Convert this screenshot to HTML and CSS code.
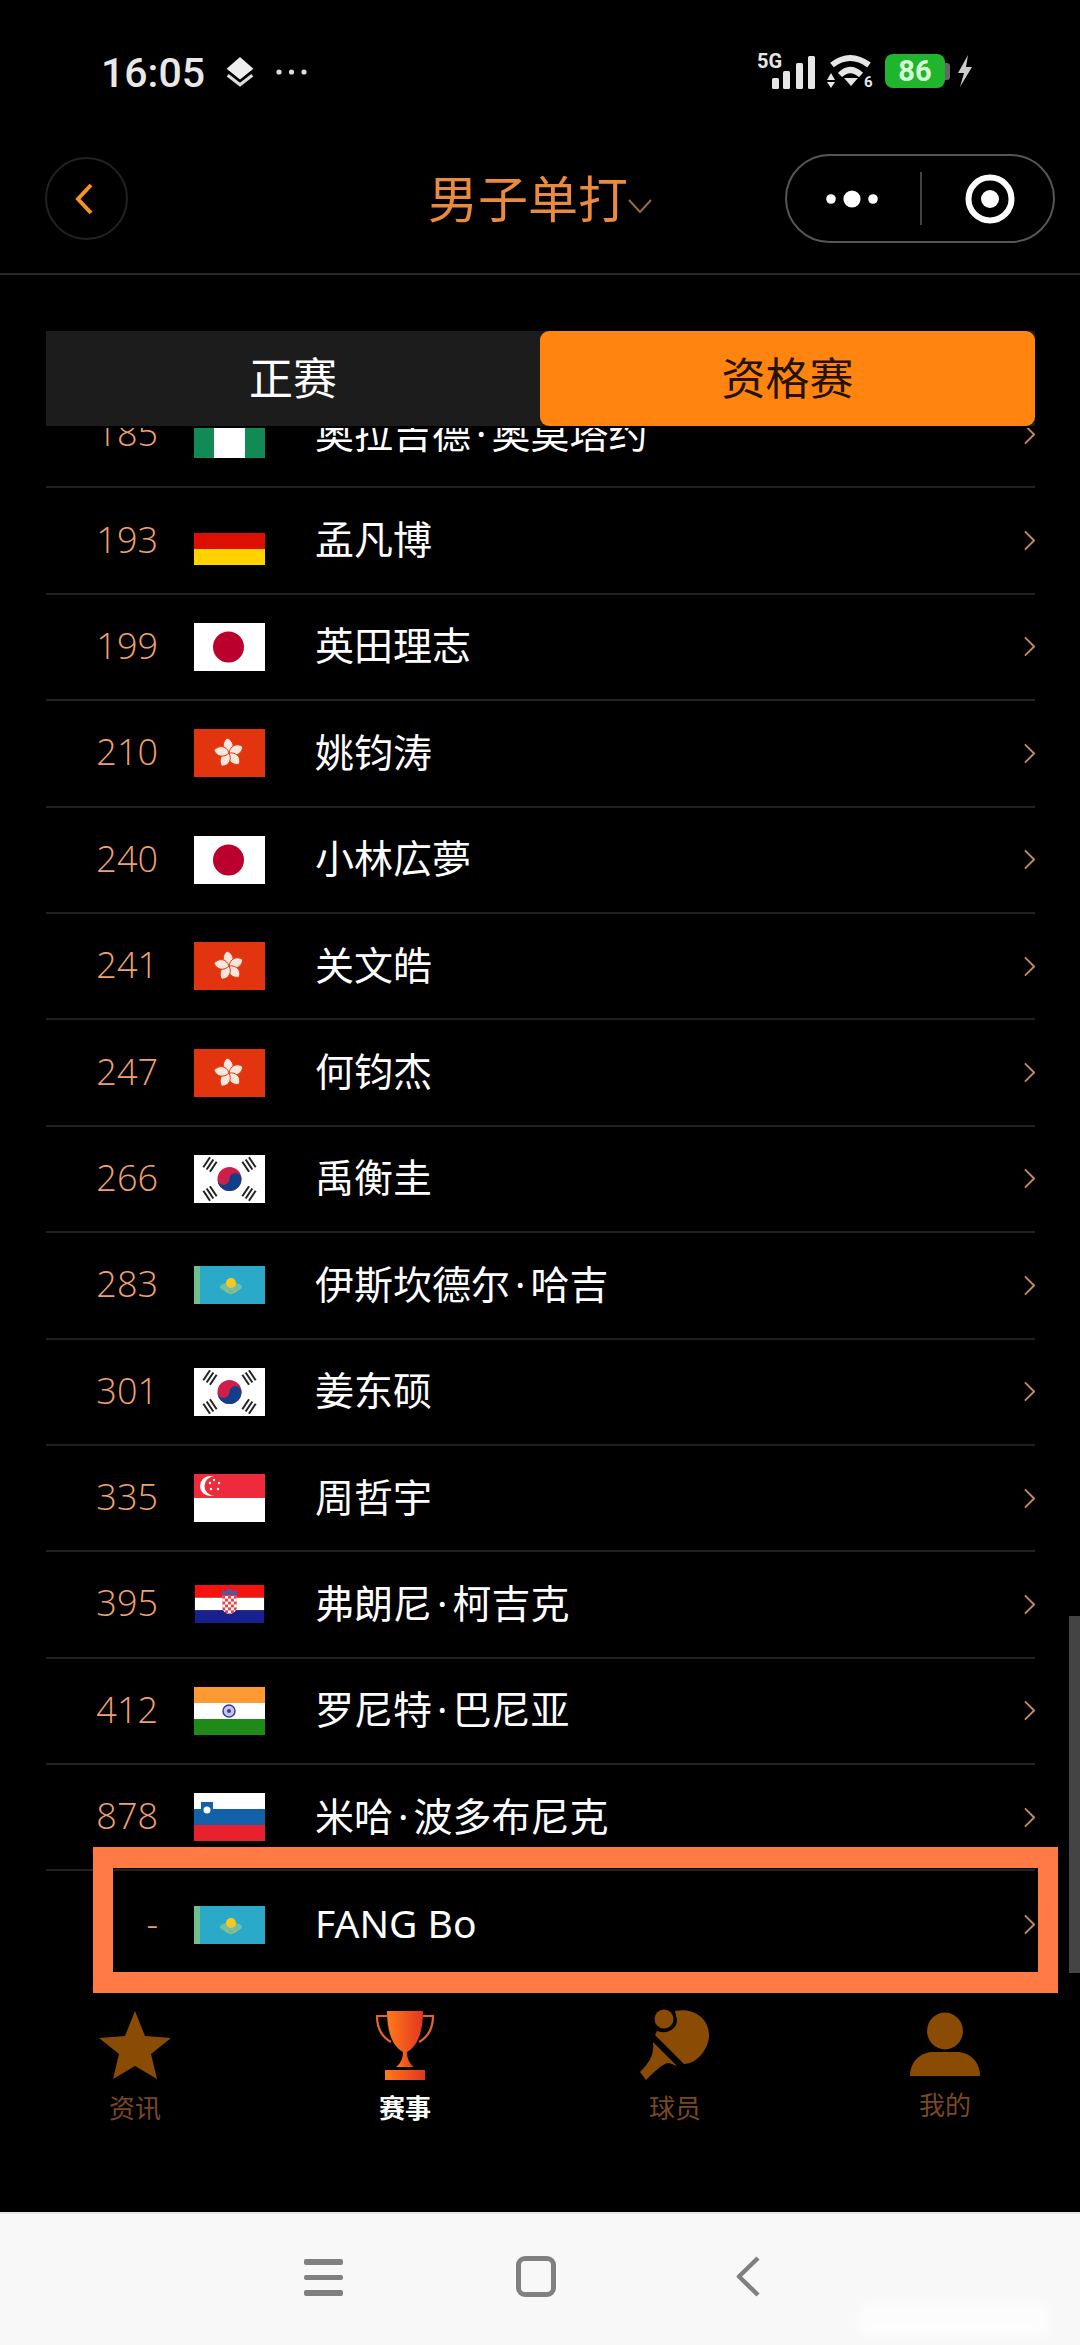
FILE: index.html
```html
<!DOCTYPE html>
<html>
  <head>
    <meta charset="utf-8">
    <title>男子单打</title>
    <link rel="stylesheet" href="styles.css">
  </head>
  <body>
  <svg class="defs" width="0" height="0">
    <defs>
      <pattern id="checks" width="6" height="6" patternUnits="userSpaceOnUse" x="28" y="11">
        <rect width="6" height="6" fill="#fff"/>
        <rect width="3" height="3" fill="#e8414a"/>
        <rect x="3" y="3" width="3" height="3" fill="#e8414a"/>
      </pattern>
      <path id="petal" d="M0 0C-6-3-8-10-2-15C4-13 7-5 0 0Z" fill="#fbe6dc" stroke="#e2340f" stroke-width=".9"/>
      <g id="bars">
        <rect x="-6" y="-5" width="12" height="2"/>
        <rect x="-6" y="-1" width="12" height="2"/>
        <rect x="-6" y="3" width="12" height="2"/>
      </g>
    </defs>
    <symbol id="chev" viewBox="0 0 12 22">
      <path d="M1 1L11 11L1 21" fill="none" stroke="#c48a62" stroke-width="2"/>
    </symbol>
    <symbol id="ng" viewBox="0 0 71 48">
      <rect width="71" height="48" fill="#fff"/>
      <rect width="20" height="48" fill="#118a55"/>
      <rect x="51" width="20" height="48" fill="#118a55"/>
    </symbol>
    <symbol id="de" viewBox="0 0 71 48">
      <rect width="71" height="16" fill="#000"/>
      <rect y="16" width="71" height="16" fill="#dd1000"/>
      <rect y="32" width="71" height="16" fill="#ffd200"/>
    </symbol>
    <symbol id="jp" viewBox="0 0 71 48">
      <rect width="71" height="48" fill="#fff"/>
      <circle cx="34.5" cy="24" r="15.5" fill="#bc002d"/>
    </symbol>
    <symbol id="hk" viewBox="0 0 71 48">
      <rect width="71" height="48" fill="#e2340f"/>
      <g transform="translate(35 24)">
        <use href="#petal"/>
        <use href="#petal" transform="rotate(72)"/>
        <use href="#petal" transform="rotate(144)"/>
        <use href="#petal" transform="rotate(216)"/>
        <use href="#petal" transform="rotate(288)"/>
      </g>
    </symbol>
    <symbol id="kr" viewBox="0 0 71 48">
      <rect width="71" height="48" fill="#fff"/>
      <circle cx="35.5" cy="24" r="12" fill="#cd1f48"/>
      <path d="M23.5 24A12 12 0 0 0 47.5 24A6 6 0 0 0 35.5 24A6 6 0 0 1 23.5 24Z" fill="#123f8c"/>
      <use href="#bars" transform="translate(16 9.5) rotate(-56)" fill="#222"/>
      <use href="#bars" transform="translate(55 9.5) rotate(56)" fill="#222"/>
      <use href="#bars" transform="translate(16 38.5) rotate(56)" fill="#222"/>
      <use href="#bars" transform="translate(55 38.5) rotate(-56)" fill="#222"/>
    </symbol>
    <symbol id="kz" viewBox="0 0 71 38">
      <rect width="71" height="38" fill="#2aaac8"/>
      <rect width="6" height="38" fill="#6fc08d"/>
      <ellipse cx="37" cy="21" rx="11" ry="4.5" fill="#74bfa0"/>
      <circle cx="37" cy="17" r="5" fill="#f7c81e"/>
      <path d="M31 24Q37 30 43 24" fill="none" stroke="#8cc28a" stroke-width="2"/>
    </symbol>
    <symbol id="sg" viewBox="0 0 71 48">
      <rect width="71" height="48" fill="#fff"/>
      <rect width="71" height="24" fill="#ee2b3d"/>
      <circle cx="16" cy="12" r="10" fill="#fff"/>
      <circle cx="20" cy="12" r="9.5" fill="#ee2b3d"/>
      <g fill="#fff">
        <circle cx="20" cy="6" r="1.2"/>
        <circle cx="25" cy="9" r="1.2"/>
        <circle cx="24" cy="15" r="1.2"/>
        <circle cx="17" cy="15" r="1.2"/>
        <circle cx="16" cy="9" r="1.2"/>
      </g>
    </symbol>
    <symbol id="hr" viewBox="0 0 71 39">
      <rect width="71" height="13" fill="#f5120f"/>
      <rect y="13" width="71" height="13" fill="#fff"/>
      <rect y="26" width="71" height="13" fill="#17208f"/>
      <path d="M28 11H43V23C43 27 39 29 35.5 30C32 29 28 27 28 23Z" fill="url(#checks)"/>
      <path d="M27 10L28 5L31 7L34 4L37 4L40 7L43 5L44 10Z" fill="#4a5ca8"/>
    </symbol>
    <symbol id="in" viewBox="0 0 71 48">
      <rect width="71" height="16" fill="#ff9a33"/>
      <rect y="16" width="71" height="16" fill="#fff"/>
      <rect y="32" width="71" height="16" fill="#1f8a1a"/>
      <circle cx="35" cy="24" r="6" fill="#c7c7ec" stroke="#3b3ba2" stroke-width="1.5"/>
      <circle cx="35" cy="24" r="2" fill="#3b3ba2"/>
    </symbol>
    <symbol id="si" viewBox="0 0 71 48">
      <rect width="71" height="16" fill="#fff"/>
      <rect y="16" width="71" height="16" fill="#1261a9"/>
      <rect y="32" width="71" height="16" fill="#e9202e"/>
      <path d="M7 9H19V18C19 21 15 23 13 24C11 23 7 21 7 18Z" fill="#1261a9"/>
      <circle cx="13" cy="17" r="3.5" fill="#fff"/>
    </symbol>
  </svg>

  <div class="page">
    <div class="statusbar">
      <span class="time">16:05</span>
      <svg class="layers" viewBox="0 0 27 29">
        <path d="M13.5 0L26 11L13.5 21L1 11Z" fill="#eee"/>
        <path d="M2 17L13.5 26L25 17" fill="none" stroke="#ddd" stroke-width="3"/>
      </svg>
      <svg class="more" viewBox="0 0 31 6">
        <circle cx="3" cy="3" r="2.6" fill="#ddd"/>
        <circle cx="15.5" cy="3" r="2.6" fill="#ddd"/>
        <circle cx="28" cy="3" r="2.6" fill="#ddd"/>
      </svg>
      <div class="status-right">
        <svg class="signal" viewBox="0 -6 58 42">
          <text x="0" y="15" class="signal-text">5G</text>
          <g fill="#e6e6e6">
            <rect x="15" y="25" width="7" height="11" rx="1.5"/>
            <rect x="26" y="18" width="7" height="18" rx="1.5"/>
            <rect x="39" y="10" width="7" height="26" rx="1.5"/>
            <rect x="51" y="3" width="7" height="33" rx="1.5"/>
          </g>
        </svg>
        <svg class="wifi" viewBox="0 0 46 40">
          <path d="M5 11Q23-3 42 11" fill="none" stroke="#e6e6e6" stroke-width="6"/>
          <path d="M13 21Q23 11 34 21" fill="none" stroke="#e6e6e6" stroke-width="6"/>
          <path d="M17 24H31L24 32Z" fill="#e6e6e6"/>
          <path d="M4 19L8 26H0ZM0 28H8L4 34Z" fill="#e6e6e6"/>
          <text x="37" y="33" class="wifi-text">6</text>
        </svg>
        <div class="battery">86</div>
        <div class="battery-nub"></div>
        <svg class="bolt" viewBox="0 0 16 32">
          <path d="M11 0L1 18H7L3 32L15 12H9Z" fill="#ccc"/>
        </svg>
      </div>
    </div>

    <div class="header">
      <div class="back">
        <svg class="back-icon" viewBox="0 0 20 32">
          <path d="M17 2L4 16L17 30" fill="none" stroke="#f7941d" stroke-width="4"/>
        </svg>
      </div>
      <div class="title">
        <span>男子单打</span>
        <svg class="title-chev" viewBox="0 0 24 14">
          <path d="M1 1L12 13L23 1" fill="none" stroke="#96684a" stroke-width="2"/>
        </svg>
      </div>
      <div class="capsule">
        <svg class="capsule-dots" viewBox="0 0 52 18">
          <circle cx="5" cy="9" r="4.8" fill="#fff"/>
          <circle cx="26" cy="9" r="8.6" fill="#fff"/>
          <circle cx="47" cy="9" r="4.8" fill="#fff"/>
        </svg>
        <div class="capsule-line"></div>
        <svg class="capsule-target" viewBox="0 0 50 50">
          <circle cx="25" cy="25" r="21.5" fill="none" stroke="#fff" stroke-width="6"/>
          <circle cx="25" cy="25" r="9" fill="#fff"/>
        </svg>
      </div>
    </div>

    <div class="tabs">
      <div class="tab">正赛</div>
      <div class="tab tab-active">资格赛</div>
    </div>

    <div class="list">
      <div class="list-inner">
        <div class="row"><span class="rank">185</span><svg class="flag"><use href="#ng"/></svg><span class="name">奥拉吉德<span class="dot">·</span>奥莫塔约</span><svg class="chev"><use href="#chev"/></svg></div>
        <div class="row"><span class="rank">193</span><svg class="flag"><use href="#de"/></svg><span class="name">孟凡博</span><svg class="chev"><use href="#chev"/></svg></div>
        <div class="row"><span class="rank">199</span><svg class="flag"><use href="#jp"/></svg><span class="name">英田理志</span><svg class="chev"><use href="#chev"/></svg></div>
        <div class="row"><span class="rank">210</span><svg class="flag"><use href="#hk"/></svg><span class="name">姚钧涛</span><svg class="chev"><use href="#chev"/></svg></div>
        <div class="row"><span class="rank">240</span><svg class="flag"><use href="#jp"/></svg><span class="name">小林広夢</span><svg class="chev"><use href="#chev"/></svg></div>
        <div class="row"><span class="rank">241</span><svg class="flag"><use href="#hk"/></svg><span class="name">关文皓</span><svg class="chev"><use href="#chev"/></svg></div>
        <div class="row"><span class="rank">247</span><svg class="flag"><use href="#hk"/></svg><span class="name">何钧杰</span><svg class="chev"><use href="#chev"/></svg></div>
        <div class="row"><span class="rank">266</span><svg class="flag"><use href="#kr"/></svg><span class="name">禹衡圭</span><svg class="chev"><use href="#chev"/></svg></div>
        <div class="row"><span class="rank">283</span><svg class="flag flag-short"><use href="#kz"/></svg><span class="name">伊斯坎德尔<span class="dot">·</span>哈吉</span><svg class="chev"><use href="#chev"/></svg></div>
        <div class="row"><span class="rank">301</span><svg class="flag"><use href="#kr"/></svg><span class="name">姜东硕</span><svg class="chev"><use href="#chev"/></svg></div>
        <div class="row"><span class="rank">335</span><svg class="flag"><use href="#sg"/></svg><span class="name">周哲宇</span><svg class="chev"><use href="#chev"/></svg></div>
        <div class="row"><span class="rank">395</span><svg class="flag flag-short"><use href="#hr"/></svg><span class="name">弗朗尼<span class="dot">·</span>柯吉克</span><svg class="chev"><use href="#chev"/></svg></div>
        <div class="row"><span class="rank">412</span><svg class="flag"><use href="#in"/></svg><span class="name">罗尼特<span class="dot">·</span>巴尼亚</span><svg class="chev"><use href="#chev"/></svg></div>
        <div class="row"><span class="rank">878</span><svg class="flag"><use href="#si"/></svg><span class="name">米哈<span class="dot">·</span>波多布尼克</span><svg class="chev"><use href="#chev"/></svg></div>
        <div class="row row-last"><span class="rank">-</span><svg class="flag flag-short"><use href="#kz"/></svg><span class="name">FANG Bo</span><svg class="chev"><use href="#chev"/></svg></div>
      </div>
    </div>

    <div class="tabbar">
      <div class="tabbar-item">
        <svg class="tabbar-icon" viewBox="0 0 72 72">
          <path d="M36 2L46 27L72 29L52 45L58 70L36 57L14 70L20 45L0 29L26 27Z" fill="#8a4b04"/>
        </svg>
        <span class="tabbar-label">资讯</span>
      </div>
      <div class="tabbar-item">
        <svg class="tabbar-icon" viewBox="9 8 72 72">
          <defs>
            <linearGradient id="cup" x1="0" x2="1" y1="0" y2="0">
              <stop offset="0" stop-color="#ff7a1c"/>
              <stop offset="1" stop-color="#e2361f"/>
            </linearGradient>
          </defs>
          <path d="M27 10H63C63 30 58 45 47 51H43C32 45 27 30 27 10Z" fill="url(#cup)"/>
          <path d="M27 15H17C17 28 22 36 31 41M63 15H73C73 28 68 36 59 41" fill="none" stroke="#e8622a" stroke-width="2.2"/>
          <path d="M43 51H47C47 58 50 63 54 66H36C40 63 43 58 43 51Z" fill="url(#cup)"/>
          <rect x="25" y="69" width="40" height="10" fill="url(#cup)"/>
        </svg>
        <span class="tabbar-label tabbar-label-active">赛事</span>
      </div>
      <div class="tabbar-item">
        <svg class="tabbar-icon" viewBox="20 8 72 72">
          <circle cx="45" cy="18" r="9.5" fill="#8a4b04"/>
          <path d="M56 10C75 6 91 18 90 36C89 48 78 63 65 63L36 34L38 30C48 34 58 28 58 19Z" fill="#8a4b04"/>
          <path d="M34 41L58 65L50 62C44 62 36 70 27 79L21 71C28 64 36 55 34 41Z" fill="#8a4b04"/>
        </svg>
        <span class="tabbar-label">球员</span>
      </div>
      <div class="tabbar-item">
        <svg class="tabbar-icon" viewBox="0 -4 72 72">
          <ellipse cx="36" cy="18" rx="18" ry="18.5" fill="#8a4b04"/>
          <path d="M1 63C1 48 12 39 24 39H48C60 39 71 48 71 63Z" fill="#8a4b04"/>
        </svg>
        <span class="tabbar-label tabbar-label-up">我的</span>
      </div>
    </div>

    <div class="navbar">
      <div class="nav-menu"><i></i><i></i><i></i></div>
      <div class="nav-home"></div>
      <svg class="nav-back" viewBox="0 0 24 41">
        <path d="M22 2L3 20.5L22 39" fill="none" stroke="#808080" stroke-width="4.5" stroke-linejoin="round"/>
      </svg>
    </div>

    <!-- things lying over the page -->
    <div class="scrollbar"></div>
    <div class="highlight"></div>
    <div class="watermark"></div>
  </div>
  </body>
</html>
```

FILE: styles.css
```css
html, body {
  margin: 0;
  background: #000;
}

body {
  font-family: "Noto Sans CJK SC", "Noto Sans", sans-serif;
}

.defs {
  position: absolute;
}

.page {
  position: relative;
  width: 1080px;
  height: 2345px;
  overflow: hidden;
  display: flex;
  flex-direction: column;
}

/* status bar */
.statusbar {
  height: 124px;
  box-sizing: border-box;
  padding: 53px 107px 0 101px;
  display: flex;
  align-items: flex-start;
}

.time {
  font-family: Roboto, sans-serif;
  font-weight: 500;
  font-size: 41px;
  line-height: 40px;
  color: #e8e8e8;
}

.layers {
  width: 30px;
  height: 31px;
  margin: 4px 0 0 20px;
}

.more {
  width: 31px;
  height: 6px;
  margin: 16px 0 0 21px;
}

.status-right {
  margin-left: auto;
  display: flex;
  align-items: center;
}

.signal {
  width: 58px;
  height: 42px;
  margin-top: -6px;
}

.signal-text {
  font-family: Roboto, sans-serif;
  font-weight: 700;
  font-size: 20px;
  fill: #e6e6e6;
}

.wifi {
  width: 46px;
  height: 40px;
  margin: 0 0 -6px 12px;
}

.wifi-text {
  font-family: Roboto, sans-serif;
  font-weight: 700;
  font-size: 15px;
  fill: #e6e6e6;
}

.battery {
  width: 60px;
  height: 34px;
  margin-left: 12px;
  border-radius: 8px;
  background: #1fb62e;
  color: #d9ffd9;
  font-family: Roboto, sans-serif;
  font-weight: 700;
  font-size: 29px;
  line-height: 34px;
  text-align: center;
}

.battery-nub {
  width: 5px;
  height: 17px;
  background: #666;
  border-radius: 0 3px 3px 0;
}

.bolt {
  width: 16px;
  height: 32px;
  margin-left: 7px;
}

/* header */
.header {
  height: 151px;
  box-sizing: border-box;
  border-bottom: 2px solid #2a2a2a;
  padding: 0 25px 0 45px;
  display: grid;
  grid-template-columns: 1fr auto 1fr;
  align-items: center;
}

.back {
  width: 83px;
  height: 83px;
  box-sizing: border-box;
  border: 2px solid #222;
  border-radius: 50%;
  display: flex;
  align-items: center;
  justify-content: center;
}

.back-icon {
  width: 20px;
  height: 32px;
  margin-right: 5px;
}

.title {
  display: flex;
  align-items: flex-end;
  margin: 0 20px 5px 0;
  font-size: 50px;
  line-height: 60px;
  color: #ea8a3e;
}

.title-chev {
  width: 24px;
  height: 14px;
  margin-bottom: 13px;
}

.capsule {
  justify-self: end;
  width: 270px;
  height: 89px;
  box-sizing: border-box;
  border: 2px solid #555;
  border-radius: 45px;
  display: flex;
  align-items: center;
}

.capsule-dots {
  width: 52px;
  height: 18px;
  margin-left: 39px;
}

.capsule-line {
  width: 2px;
  height: 53px;
  margin-left: 42px;
  background: #444;
}

.capsule-target {
  width: 50px;
  height: 50px;
  margin-left: 43px;
}

/* tabs */
.tabs {
  margin: 56px 45px 0 46px;
  height: 95px;
  display: grid;
  grid-template-columns: 494px 495px;
  background: #1c1c1c;
}

.tab {
  font-size: 44px;
  line-height: 90px;
  text-align: center;
  color: #fff;
}

.tab-active {
  background: #ff8410;
  border-radius: 9px;
  color: #241300;
}

/* player list */
.list {
  height: 1549px;
  margin-top: 2px;
  overflow: hidden;
  flex: none;
}

.list-inner {
  margin: -46px 45px 0 46px;
}

.row {
  height: 106.4px;
  box-sizing: border-box;
  border-bottom: 2px solid #222;
  display: flex;
  align-items: center;
}

.row-last {
  border-bottom: 0;
}

.rank {
  width: 112px;
  flex: none;
  margin-top: -3px;
  text-align: right;
  font-family: "Open Sans", sans-serif;
  font-weight: 300;
  font-size: 36px;
  color: #f0a070;
}

.flag {
  width: 71px;
  height: 48px;
  flex: none;
  margin-left: 36px;
}

.flag-short {
  height: 38px;
}

.name {
  flex: 1;
  margin: -3px 0 0 50px;
  font-family: "Noto Sans", "Noto Sans CJK SC", sans-serif;
  font-size: 39px;
  line-height: 50px;
  color: #fff;
}

.dot {
  margin: 0 5px;
}

.chev {
  width: 11px;
  height: 21px;
  flex: none;
}

/* bottom tabs */
.tabbar {
  flex: 1;
  padding-top: 32px;
  display: grid;
  grid-template-columns: repeat(4, 1fr);
  align-items: start;
}

.tabbar-item {
  display: flex;
  flex-direction: column;
  align-items: center;
}

.tabbar-icon {
  width: 72px;
  height: 72px;
}

.tabbar-label {
  margin-top: 11px;
  font-size: 26px;
  line-height: 30px;
  color: #7a4820;
}

.tabbar-label-active {
  color: #fff;
  font-weight: 700;
}

.tabbar-label-up {
  margin-top: 8px;
}

/* android nav */
.navbar {
  height: 133px;
  box-sizing: border-box;
  flex: none;
  padding: 42px 16px 0 0;
  background: #f7f8f7;
  border-top: 2px solid #e4e4e4;
  display: flex;
  align-items: flex-start;
  justify-content: center;
}

.nav-menu {
  width: 39px;
  padding-top: 3px;
  display: flex;
  flex-direction: column;
  gap: 10px;
}

.nav-menu i {
  display: block;
  height: 5.5px;
  border-radius: 2px;
  background: #808080;
}

.nav-home {
  width: 40px;
  height: 41px;
  box-sizing: border-box;
  margin-left: 173px;
  border: 5px solid #808080;
  border-radius: 9px;
}

.nav-back {
  width: 24px;
  height: 41px;
  margin-left: 180px;
}

/* overlays */
.scrollbar {
  position: absolute;
  left: 1069px;
  top: 1616px;
  width: 11px;
  height: 357px;
  background: #444;
}

.highlight {
  position: absolute;
  left: 93px;
  top: 1847px;
  width: 965px;
  height: 146px;
  box-sizing: border-box;
  border: solid #ff7a45;
  border-width: 21px 20px;
}

.watermark {
  position: absolute;
  left: 860px;
  top: 2304px;
  width: 190px;
  height: 30px;
  background: #fff;
  opacity: 0.7;
  filter: blur(5px);
}
```
